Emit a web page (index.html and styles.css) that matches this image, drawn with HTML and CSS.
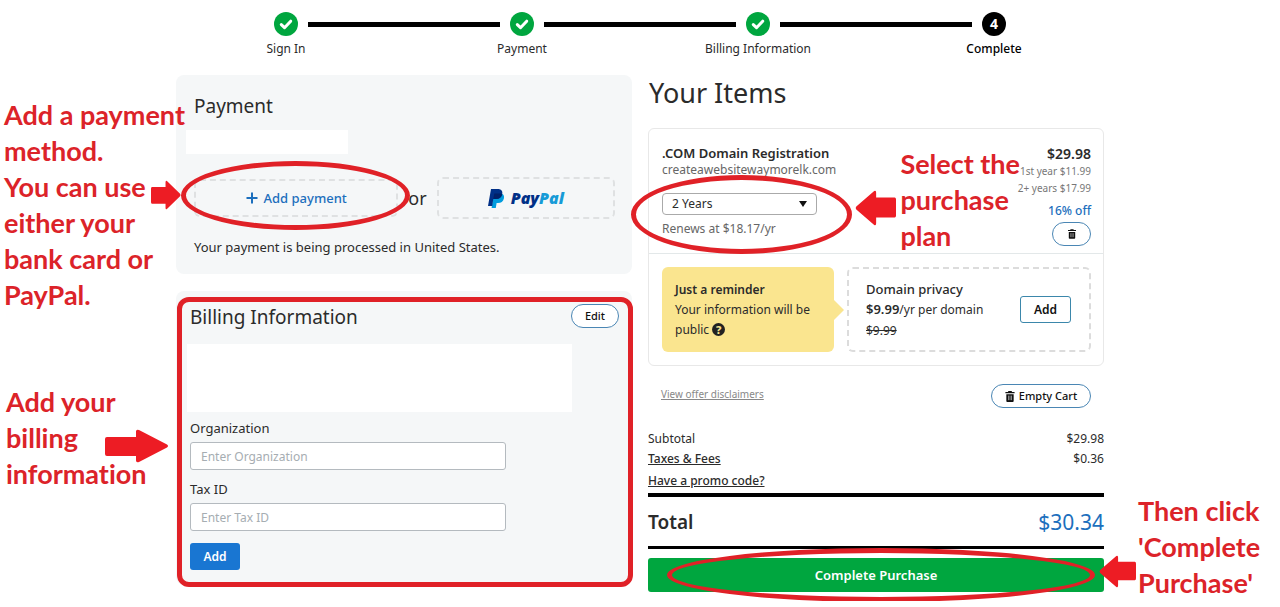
FILE: index.html
```html
<!DOCTYPE html>
<html lang="en">
<head>
<meta charset="utf-8">
<meta name="viewport" content="width=device-width, initial-scale=1">
<title>Checkout guide</title>
<link rel="stylesheet" href="styles.css">
</head>
<body>
<svg class="defs" width="0" height="0" aria-hidden="true">
  <symbol id="check" viewBox="0 0 24 24"><circle cx="12" cy="12" r="12" fill="#00a63f"/><path d="M7.3 12.6l3.2 3.1 6.2-6.5" fill="none" stroke="#fff" stroke-width="3" stroke-linecap="round" stroke-linejoin="round"/></symbol>
  <symbol id="trash" viewBox="0 0 10 12"><path d="M3 0h4v1h3v1.4H0V1h3zM1 3.6h8V11a1 1 0 0 1-1 1H2a1 1 0 0 1-1-1z" fill="#111"/><path d="M3.4 5v5M5 5v5M6.6 5v5" stroke="#bbb" stroke-width=".8"/></symbol>
  <symbol id="arrow" viewBox="0 0 64 34" preserveAspectRatio="none"><path d="M2 8h29V2.500q0-2.500 3-1.500l28 14.500q2 1.500 0 3L34 33q-3 1-3-1.500V27H2q-2 0-2-2V10q0-2 2-2z" fill="#ed1c24"/></symbol>
</svg>
<div class="page">
  <aside class="notes notes-left">
    <p class="note">Add a payment<br>method.<br>You can use<br>either your<br>bank card or<br>PayPal.</p>
    <p class="note note-billing">Add your<br>billing<br>information</p>
    <svg class="arrow arrow-payment" aria-hidden="true"><use href="#arrow"/></svg>
    <svg class="arrow arrow-billing" aria-hidden="true"><use href="#arrow"/></svg>
  </aside>

  <main class="checkout">
    <ol class="steps">
      <li class="step"><span class="track"><svg class="dot"><use href="#check"/></svg></span>Sign In</li>
      <li class="step"><span class="track"><svg class="dot"><use href="#check"/></svg></span>Payment</li>
      <li class="step"><span class="track"><svg class="dot"><use href="#check"/></svg></span>Billing Information</li>
      <li class="step current"><span class="track"><span class="dot number">4</span></span>Complete</li>
    </ol>

    <div class="columns">
      <div class="column">
        <section class="card payment">
          <h2>Payment</h2>
          <div class="blank blank-method"></div>
          <div class="methods">
            <div class="method-slot">
              <button class="method add-method" type="button"><svg width="12" height="12" viewBox="0 0 12 12"><path d="M6 0.500v11M0.500 6h11" stroke="#1c6fbd" stroke-width="2"/></svg>Add payment</button>
              <span class="ring ring-payment"></span>
            </div>
            <span class="or">or</span>
            <button class="method paypal" type="button" aria-label="PayPal">
              <svg width="17" height="19" viewBox="0 0 17 19"><path d="M5.500 4.500h6.500c3.500 0 4.500 2.300 3.900 5-.7 3.200-2.900 4.500-5.900 4.500H8.600L7.800 19H3.600z" fill="#009cde"/><path d="M3 0h6.700c3.700 0 5.200 2.100 4.500 5.200-.8 3.500-3.100 4.800-6.500 4.800H5.300L4.200 17H0z" fill="#003087"/><path d="M5.300 10l1-5.500H12q1.300 0 2.200.6C13.500 8.600 11.200 10 7.700 10z" fill="#012169"/></svg>
              <span class="wordmark">Pay<span class="pal">Pal</span></span>
            </button>
          </div>
          <p class="processed">Your payment is being processed in United States.</p>
        </section>

        <section class="card billing">
          <div class="billing-head">
            <h2>Billing Information</h2>
            <button class="pill edit" type="button">Edit</button>
          </div>
          <div class="blank blank-address"></div>
          <form class="fields">
            <label for="org">Organization</label>
            <input id="org" type="text" placeholder="Enter Organization">
            <label for="tax">Tax ID</label>
            <input id="tax" type="text" placeholder="Enter Tax ID">
            <button class="add-blue" type="button">Add</button>
          </form>
          <span class="frame"></span>
        </section>
      </div>

      <div class="column">
        <h1>Your Items</h1>
        <section class="items">
          <div class="item">
            <div class="item-info">
              <h3>.COM Domain Registration</h3>
              <p class="domain">createawebsitewaymorelk.com</p>
              <div class="term">
                <select aria-label="Term"><option>2 Years</option></select>
                <svg class="caret" width="8" height="6" viewBox="0 0 8 6"><path d="M0 0h8L4 6z" fill="#111"/></svg>
                <span class="ring ring-term"></span>
              </div>
              <p class="renews">Renews at $18.17/yr</p>
            </div>
            <div class="item-price">
              <strong>$29.98</strong>
              <span class="rate">1st year $11.99</span>
              <span class="rate">2+ years $17.99</span>
              <span class="off">16% off</span>
              <button class="pill remove" type="button" aria-label="Remove"><svg width="8" height="10"><use href="#trash"/></svg></button>
            </div>
            <svg class="arrow arrow-plan" aria-hidden="true"><use href="#arrow"/></svg>
            <p class="note note-plan">Select the<br>purchase<br>plan</p>
          </div>
          <div class="extras">
            <div class="reminder"><b>Just a reminder</b><br>Your information will be<br>public <span class="help">?</span></div>
            <div class="privacy">
              <p><span class="privacy-name">Domain privacy</span><br><b>$9.99</b><span class="small">/yr per domain</span><br><s class="small">$9.99</s></p>
              <button class="add-line" type="button">Add</button>
            </div>
          </div>
        </section>

        <div class="cart-tools">
          <a class="disclaimers" href="#">View offer disclaimers</a>
          <button class="pill empty" type="button"><svg width="10" height="11"><use href="#trash"/></svg>Empty Cart</button>
        </div>

        <div class="sum"><span>Subtotal</span><span>$29.98</span></div>
        <div class="sum"><a href="#">Taxes &amp; Fees</a><span>$0.36</span></div>
        <div class="sum promo"><a href="#">Have a promo code?</a></div>
        <div class="total"><b>Total</b><span>$30.34</span></div>
        <div class="purchase">
          <button class="complete" type="button">Complete Purchase</button>
          <span class="ring ring-purchase"></span>
        </div>
      </div>
    </div>
  </main>

  <aside class="notes notes-right">
    <p class="note">Then click<br>'Complete<br>Purchase'</p>
    <svg class="arrow arrow-purchase" aria-hidden="true"><use href="#arrow"/></svg>
  </aside>
</div>
</body>
</html>
```

FILE: styles.css
```css
* { box-sizing: border-box; }
body {
  margin: 0;
  background: #fff;
  color: #2b2b2b;
  font: 13px/20px "Noto Sans", sans-serif;
}
h1, h2, h3, p, ol { margin: 0; padding: 0; font-weight: 400; }
button, input, select { font: inherit; color: inherit; }
button { padding: 0; cursor: pointer; }
a { color: inherit; }
.defs { position: absolute; }

.page {
  display: grid;
  grid-template-columns: minmax(0, 1fr) minmax(0, 928px) minmax(0, 1fr);
}

/* Red guide notes */
.notes { position: relative; z-index: 2; }
.notes-left { padding: 97px 0 0 4px; }
.notes-right { padding: 493px 0 0 34px; }
.note {
  color: #dc2329;
  font: 700 27px/36px Lato, sans-serif;
  font-variant-ligatures: none;
  white-space: nowrap;
}
.note-billing { padding: 71px 0 0 2px; }
.arrow { position: absolute; }
.arrow-payment { left: 151px; top: 180px; width: 30px; height: 30px; }
.arrow-billing { left: 105px; top: 429px; width: 64px; height: 34px; }
.arrow-plan { right: 207px; top: 61px; width: 41px; height: 36px; transform: rotate(180deg); }
.arrow-purchase { left: -5px; top: 555px; width: 37px; height: 33px; transform: rotate(180deg); }
.note-plan { position: absolute; right: 83px; top: 17px; }

.ring {
  position: absolute;
  border: 5px solid #e02127;
  border-radius: 50%;
  pointer-events: none;
}
.ring-payment { inset: -18px -12px -13px -13px; }
.ring-term { inset: -18px -35px -39px -31px; }
.ring-purchase { inset: -10px 9px -10px 19px; }

/* Progress */
.steps {
  display: grid;
  grid-template-columns: repeat(4, 1fr);
  margin: 0 -8px;
  padding-top: 12px;
  list-style: none;
}
.step { text-align: center; font-size: 12px; line-height: 16px; }
.track {
  display: grid;
  grid-template-columns: 1fr 24px 1fr;
  gap: 10px;
  align-items: center;
  margin-bottom: 5px;
}
.track::before, .track::after { content: ""; height: 5px; background: #000; }
.step:first-child .track::before, .step:last-child .track::after { background: none; }
.dot { width: 24px; height: 24px; }
.number {
  border-radius: 50%;
  background: #000;
  color: #fff;
  font-size: 14px;
  font-weight: 700;
  line-height: 24px;
}
.current { color: #000; font-weight: 500; }

.columns {
  display: grid;
  grid-template-columns: 1fr 1fr;
  gap: 16px;
  padding-top: 18px;
}

/* Payment and billing */
.card { position: relative; border-radius: 8px; background: #f5f7f8; }
h2 { font-size: 19px; line-height: 26px; }
.payment { padding: 18px 17px 17px 18px; }
.blank { background: #fff; }
.blank-method { width: 162px; height: 24px; margin: 11px 0 0 -8px; }
.methods {
  display: grid;
  grid-template-columns: 205fr auto 179fr;
  gap: 10px;
  align-items: center;
  margin-top: 23px;
}
.method-slot { position: relative; }
.method {
  display: flex;
  align-items: center;
  justify-content: center;
  border: 2px dashed #dfe1e2;
  border-radius: 6px;
  background: none;
}
.add-method {
  width: 100%;
  height: 38px;
  gap: 6px;
  color: #1c6fbd;
  font-weight: 500;
}
.or { font-size: 18px; }
.paypal { height: 42px; gap: 6px; }
.wordmark { color: #003087; font: italic 800 16px/20px "Open Sans", sans-serif; }
.pal { color: #169bd7; }
.processed { margin-top: 18px; }

.billing { margin-top: 17px; padding: 13px 13px 15px 14px; }
.billing-head { display: flex; justify-content: space-between; }
.pill {
  display: flex;
  align-items: center;
  justify-content: center;
  height: 24px;
  border: 1px solid #4a86b4;
  border-radius: 12px;
  background: #fff;
  color: #111;
  font-size: 11px;
  font-weight: 500;
}
.edit { width: 48px; }
.blank-address { width: 385px; height: 68px; margin: 14px 0 6px -3px; }
.fields { display: flex; flex-direction: column; align-items: flex-start; }
.fields label { margin-bottom: 4px; }
.fields input {
  width: 316px;
  max-width: 100%;
  height: 28px;
  margin-bottom: 9px;
  padding: 0 10px;
  border: 1px solid #b4babf;
  border-radius: 3px;
  background: #fff;
  font-size: 12px;
}
.fields input::placeholder { color: #a6adb2; opacity: 1; }
.add-blue {
  width: 50px;
  height: 27px;
  margin-top: 3px;
  border: 0;
  border-radius: 3px;
  background: #1976d2;
  color: #fff;
  font-size: 12px;
  font-weight: 600;
}
.frame {
  position: absolute;
  inset: 6px -1px -2px 1px;
  border: 5px solid #e02127;
  border-radius: 12px;
  pointer-events: none;
}

/* Items */
h1 { padding-left: 1px; font-size: 27px; line-height: 36px; }
.items { margin-top: 17px; border: 1px solid #e8e8e8; border-radius: 6px; }
.item {
  position: relative;
  display: flex;
  justify-content: space-between;
  padding: 15px 12px 7px 13px;
  border-bottom: 1px solid #e3e8e9;
}
h3 { font-size: 13px; font-weight: 600; line-height: 18px; }
.domain { color: #666; font-size: 12px; line-height: 16px; }
.term { position: relative; width: 155px; margin-top: 15px; }
.term select {
  display: block;
  width: 100%;
  height: 22px;
  padding: 0 9px;
  border: 1px solid #aaa;
  border-radius: 4px;
  background: #fff;
  font-size: 12px;
  appearance: none;
}
.caret { position: absolute; right: 10px; top: 8px; }
.renews { margin-top: 5px; color: #666; font-size: 12px; line-height: 18px; }
.item-price { display: flex; flex-direction: column; align-items: flex-end; }
.item-price strong { font-size: 14px; font-weight: 600; line-height: 19px; }
.rate { color: #777; font-size: 10px; line-height: 17px; }
.off { margin-top: 5px; color: #1c6fbd; font-size: 12px; font-weight: 500; line-height: 18px; }
.remove { width: 39px; margin-top: 2px; }

.extras {
  display: grid;
  grid-template-columns: 172fr 244fr;
  gap: 13px;
  padding: 13px 12px 13px 13px;
}
.reminder {
  position: relative;
  padding: 13px 0 12px 13px;
  border-radius: 6px;
  background: #fae58f;
  white-space: nowrap;
  font-size: 12px;
}
.reminder::after {
  content: "";
  position: absolute;
  left: 100%;
  top: 33px;
  border: 10px solid transparent;
  border-left-color: #fae58f;
  border-right: 0;
}
.reminder b, .privacy b { font-weight: 600; }
.help {
  display: inline-block;
  width: 13px;
  height: 13px;
  border-radius: 50%;
  background: #222;
  color: #fae58f;
  font-size: 11px;
  font-weight: 800;
  line-height: 13px;
  text-align: center;
}
.privacy {
  display: flex;
  align-items: center;
  justify-content: space-between;
  padding: 0 18px 0 17px;
  border: 2px dashed #dcdcdc;
  border-radius: 6px;
}
.privacy-name { font-weight: 500; }
.small { font-size: 12px; }
.add-line {
  width: 51px;
  height: 27px;
  border: 1px solid #3b87ab;
  border-radius: 3px;
  background: #fff;
  color: #111;
  font-size: 12px;
  font-weight: 600;
}

.cart-tools {
  display: flex;
  align-items: flex-start;
  justify-content: space-between;
  padding: 18px 13px 21px;
}
.disclaimers { color: #888; font-size: 10px; line-height: 20px; }
.empty { width: 100px; gap: 4px; }

.sum { display: flex; justify-content: space-between; font-size: 12px; }
.sum a { font-weight: 500; }
.promo { padding: 2px 0; }
.total {
  display: flex;
  align-items: center;
  justify-content: space-between;
  height: 56px;
  border: solid #000;
  border-width: 4px 0 3px;
  font-size: 19px;
}
.total b { font-weight: 600; }
.total span { color: #1c6fbd; font-size: 21px; }
.purchase { position: relative; margin-top: 9px; }
.complete {
  display: block;
  width: 100%;
  height: 34px;
  border: 0;
  border-radius: 3px;
  background: #00a63f;
  color: #fff;
  font-weight: 600;
}
```
